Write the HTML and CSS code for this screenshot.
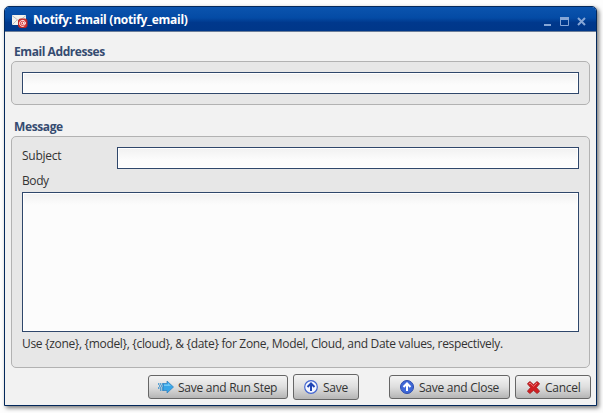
FILE: index.html
```html
<!DOCTYPE html>
<html lang="en">
<head>
<meta charset="utf-8">
<title>Notify: Email</title>
<link rel="stylesheet" href="styles.css">
</head>
<body>
<form class="window">
  <header class="titlebar">
    <svg class="mail" width="16" height="14" viewBox="0 0 16 14">
      <rect x="0" y="1" width="14" height="10" fill="#f2f2ed"/>
      <path d="M0 1.5L7 7L14 1.5M0 11L5 6M14 11L9 6" fill="none" stroke="#b9bdc0"/>
      <rect x="6.500" y="5" width="8.500" height="8.500" rx="2" fill="#d63332" stroke="#b92727"/>
      <circle cx="10.500" cy="9.300" r="1.300" fill="none" stroke="#fff" stroke-width=".9"/>
      <path d="M11.900 8V10.200Q13.500 11 13.500 9A3 3 0 1 0 12.300 11.800" fill="none" stroke="#fff" stroke-width=".9"/>
    </svg>
    <h1 class="title">Notify: Email (notify_email)</h1>
    <svg class="controls" width="44" height="11" viewBox="0 0 44 11" fill="none" stroke="#86a6d6">
      <path d="M1 9H8" stroke-width="2"/>
      <path d="M17.500 1V9.500H25.500V1" stroke-width="1"/>
      <path d="M17 2.500H26" stroke-width="3"/>
      <path d="M35 2L42 9M42 2L35 9" stroke-width="2"/>
    </svg>
  </header>
  <h2 class="heading addresses-heading">Email Addresses</h2>
  <section class="panel addresses">
    <input class="field" type="text" aria-label="Email Addresses">
  </section>
  <h2 class="heading message-heading">Message</h2>
  <section class="panel message">
    <div class="row">
      <label class="label" for="subject">Subject</label>
      <input class="field" id="subject" type="text">
    </div>
    <label class="body-label" for="body">Body</label>
    <textarea class="field area" id="body"></textarea>
    <p class="hint">Use {zone}, {model}, {cloud}, &amp; {date} for Zone, Model, Cloud, and Date values, respectively.</p>
  </section>
  <footer class="actions">
    <button class="button run" type="button">
      <svg width="16" height="14" viewBox="0 0 16 14">
        <path d="M6 3.500H9V1L15.500 7L9 13V10.500H5V3.500Z" fill="#38a6e8" stroke="#2c7dbb" stroke-width=".7"/>
        <path d="M6 4.500H10V3L13 6H6Z" fill="#70c8f5"/>
        <path d="M0 4H6M1 6H6M0 8H6M2 10H6" stroke="#338dcc" stroke-width="1.500" stroke-dasharray="1.400 .6"/>
      </svg>
      <span>Save and Run Step</span>
    </button>
    <button class="button save" type="button">
      <svg width="14" height="14" viewBox="0 0 14 14">
        <circle cx="7" cy="7" r="6.300" fill="#f5f7ff" stroke="#4265d0" stroke-width="1.200"/>
        <path d="M7 11V4M3.500 7L7 3.500L10.500 7" fill="none" stroke="#1f45b5" stroke-width="2"/>
      </svg>
      <span>Save</span>
    </button>
    <button class="button close" type="button">
      <svg width="14" height="14" viewBox="0 0 14 14">
        <circle cx="7" cy="7" r="6.500" fill="#3f68d7" stroke="#2a4bae"/>
        <path d="M7 11V4M3.500 7L7 3.500L10.500 7" fill="none" stroke="#fff" stroke-width="2"/>
      </svg>
      <span>Save and Close</span>
    </button>
    <button class="button cancel" type="button">
      <svg width="13" height="13" viewBox="0 0 13 13">
        <path d="M2.800 .4L6.500 3.600L10.200 .4L12.600 2.800L9.400 6.500L12.600 10.200L10.200 12.600L6.500 9.400L2.800 12.600L.4 10.200L3.600 6.500L.4 2.800Z" fill="#d01f22" stroke="#9d2022" stroke-width=".8"/>
        <path d="M2 3L3 2L6.500 5.300L10 2" fill="none" stroke="#ed7677"/>
      </svg>
      <span>Cancel</span>
    </button>
  </footer>
</form>
</body>
</html>
```
FILE: styles.css
```css
* { box-sizing: border-box; }
html { height: 413px; background: #fdfdfd; }
body {
  height: 413px;
  margin: 0;
  padding: 6px 6px 0 4px;
  background: #fdfdfd;
  color: #333;
  font: 12px/16px "Open Sans", "Noto Sans", sans-serif;
  overflow: hidden;
}
.window {
  height: 400px;
  border: 1px solid #03285b;
  border-radius: 5px 5px 0 0;
  background: #f2f2f2;
  box-shadow: 2px 2px 4px #777;
}
.titlebar {
  display: flex;
  align-items: center;
  height: 25px;
  padding: 0 9px 0 7px;
  border-bottom: 1px solid #6c7e99;
  border-radius: 4px 4px 0 0;
  background: linear-gradient(#0b54ae, #044ba5 45%, #00388c 65%, #003789);
}
.mail { margin-top: 3px; }
.title {
  margin: 2px auto 0 5px;
  color: #fff;
  font-size: 12px;
  font-weight: 700;
  line-height: 16px;
  letter-spacing: -.28px;
  white-space: nowrap;
}
.controls { margin-top: 4px; }
.heading {
  margin: 0 0 0 9px;
  height: 16px;
  color: #354b70;
  font-size: 12px;
  font-weight: 700;
  line-height: 16px;
  letter-spacing: -.43px;
}
.addresses-heading { margin-top: 12px; margin-bottom: 1px; }
.message-heading { margin-top: 14px; margin-bottom: 1px; letter-spacing: -.38px; }
.panel {
  margin: 0 6px;
  padding: 10px;
  border: 1px solid #b2b2b2;
  border-radius: 5px;
  background: #e7e7e7;
}
.addresses { height: 44px; }
.message { height: 232px; }
.field {
  display: block;
  width: 100%;
  height: 22px;
  margin: 0;
  padding: 2px 4px;
  border: 1px solid #2f476b;
  border-radius: 0;
  outline: 0;
  background: linear-gradient(#f1f1f1, #fcfcfc 12px);
  box-shadow: inset 0 0 0 1px #fff;
  font: inherit;
}
.row { display: flex; }
.label { flex: 0 0 95px; padding-top: 1px; letter-spacing: -.25px; }
.body-label { display: block; height: 23px; padding-top: 4px; letter-spacing: -.4px; }
.area { height: 140px; resize: none; }
.hint { margin: 4px 0 0; white-space: nowrap; letter-spacing: -.325px; }
.actions {
  display: flex;
  align-items: center;
  justify-content: flex-end;
  height: 26px;
  margin: 6px 5px 0 0;
}
.button {
  display: flex;
  align-items: center;
  flex: none;
  height: 24px;
  margin: 0 0 0 5px;
  padding: 0 0 0 9px;
  border: 1px solid #666;
  border-radius: 3px;
  background: linear-gradient(#f4f4f4, #dedede 50%, #b5b5b5);
  color: #333;
  font: inherit;
  letter-spacing: -.27px;
  white-space: nowrap;
}
.button span { margin-left: 4px; padding-top: 1px; }
.run { width: 140px; }
.save { width: 66px; height: 26px; padding-left: 10px; }
.save span { margin-left: 5px; }
.close { width: 121px; margin-left: 30px; padding-left: 10px; }
.close span { margin-left: 5px; }
.cancel { width: 76px; padding-left: 11px; }
.cancel span { margin-left: 5px; }
```
